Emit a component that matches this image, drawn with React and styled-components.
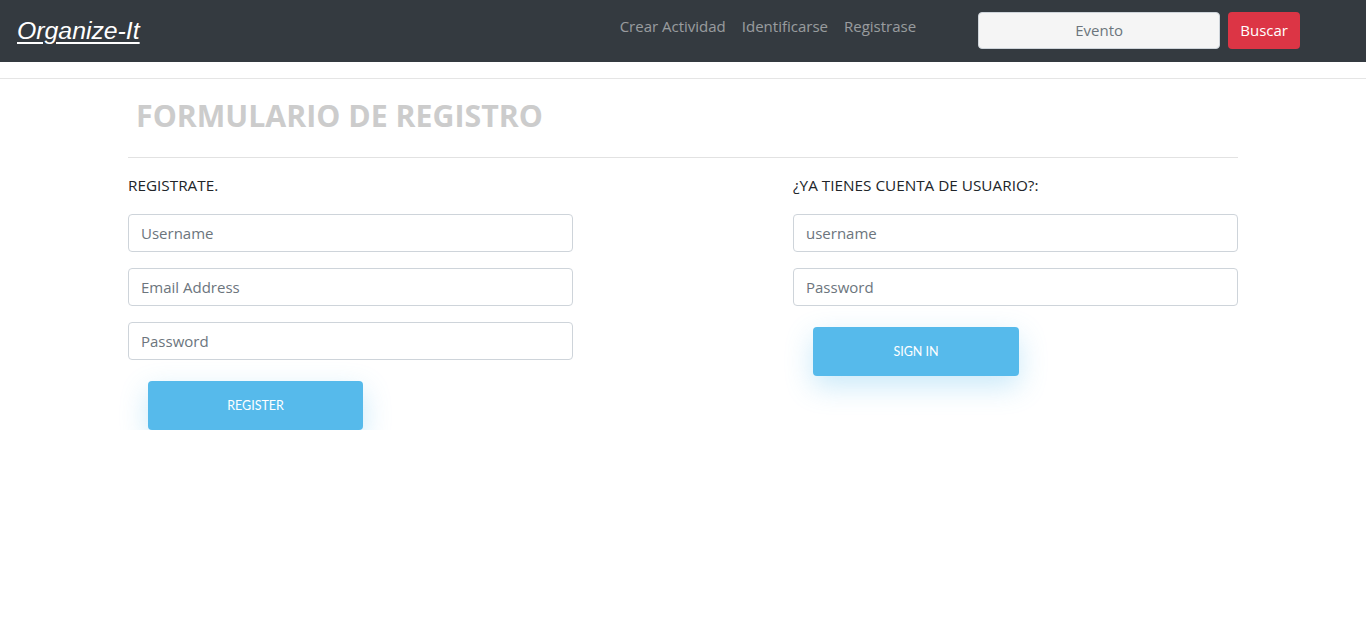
import { createGlobalStyle } from "styled-components";
import styled from "styled-components";

const GlobalStyle = createGlobalStyle`
  body {
    margin: 0;
    background: #fff;
    font-family: "Open Sans", "Noto Sans", sans-serif;
    color: #212529;
  }
  * { box-sizing: border-box; }
`;

const NavBar = styled.nav`
  height: 62px;
  background: #343a40;
  display: flex;
  align-items: center;
  padding: 0 17px;
`;

const Brand = styled.a`
  font-family: "Liberation Sans", Arial, sans-serif;
  font-style: italic;
  font-size: 24.8px;
  color: #fff;
  text-decoration: underline;
  text-underline-offset: 3px;
  text-decoration-thickness: 2px;
  margin-top: -1px;
`;

const NavLinks = styled.div`
  display: flex;
  gap: 16px;
  margin-left: 480px;
  margin-top: -11px;
`;

const NavLink = styled.a`
  font-size: 15px;
  color: rgba(255, 255, 255, 0.5);
  text-decoration: none;
`;

const SearchForm = styled.form`
  display: flex;
  gap: 8px;
  margin-left: 62px;
  margin-top: -2px;
`;

const SearchInput = styled.input`
  width: 242px;
  height: 37px;
  border: 1px solid #ced4da;
  border-radius: 4px;
  background: #f5f5f5;
  text-align: center;
  font-family: inherit;
  font-size: 15px;
  &::placeholder { color: #6c757d; }
`;

const SearchButton = styled.button`
  width: 72px;
  height: 37px;
  border: none;
  border-radius: 4px;
  background: #dc3545;
  color: #fff;
  font-family: inherit;
  font-size: 15px;
`;

const Divider = styled.div`
  margin-top: 16px;
  border-top: 1px solid #e5e5e5;
`;

const Container = styled.main`
  width: 1110px;
  margin: 0 auto;
`;

const Title = styled.h1`
  margin: 0;
  padding: 17px 0 0 8px;
  font-size: 30.3px;
  font-weight: 700;
  color: #cccccc;
  line-height: 40px;
`;

const Rule = styled.hr`
  margin: 21px 0 0;
  border: none;
  border-top: 1px solid #e2e2e2;
`;

const Columns = styled.div`
  display: flex;
  justify-content: space-between;
  padding-top: 17px;
`;

const Column = styled.section`
  width: 445px;
  display: flex;
  flex-direction: column;
`;

const Label = styled.h2`
  margin: 0 0 19px;
  font-size: 15.3px;
  font-weight: 400;
  line-height: 20px;
  color: #212529;
`;

const Field = styled.input`
  height: 38px;
  margin-bottom: 16px;
  padding: 0 12px;
  border: 1px solid #ced4da;
  border-radius: 4px;
  font-family: inherit;
  font-size: 15px;
  &::placeholder { color: #6c757d; }
`;

const ActionButton = styled.button`
  width: ${(p) => p.$width}px;
  height: 49px;
  margin: ${(p) => p.$top}px 0 0 20px;
  border: none;
  border-radius: 4px;
  background: #56baeb;
  color: #fff;
  font-family: Lato, "Open Sans", sans-serif;
  font-size: 12.5px;
  box-shadow: 0 10px 28px rgba(86, 186, 235, 0.32);
`;

export default function App() {
  return (
    <>
      <GlobalStyle />
      <NavBar>
        <Brand href="#">Organize-It</Brand>
        <NavLinks>
          <NavLink href="#">Crear Actividad</NavLink>
          <NavLink href="#">Identificarse</NavLink>
          <NavLink href="#">Registrase</NavLink>
        </NavLinks>
        <SearchForm onSubmit={(e) => e.preventDefault()}>
          <SearchInput placeholder="Evento" />
          <SearchButton>Buscar</SearchButton>
        </SearchForm>
      </NavBar>
      <Divider />
      <Container>
        <Title>FORMULARIO DE REGISTRO</Title>
        <Rule />
        <Columns>
          <Column>
            <Label>REGISTRATE.</Label>
            <Field placeholder="Username" />
            <Field placeholder="Email Address" />
            <Field placeholder="Password" type="password" />
            <ActionButton $width={215} $top={5}>REGISTER</ActionButton>
          </Column>
          <Column>
            <Label>¿YA TIENES CUENTA DE USUARIO?:</Label>
            <Field placeholder="username" />
            <Field placeholder="Password" type="password" />
            <ActionButton $width={206} $top={5}>SIGN IN</ActionButton>
          </Column>
        </Columns>
      </Container>
    </>
  );
}
